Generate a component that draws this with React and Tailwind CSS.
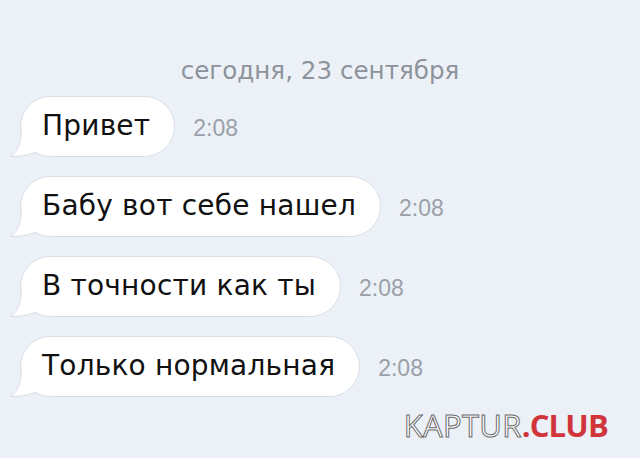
const messages = [
  { text: 'Привет', time: '2:08' },
  { text: 'Бабу вот себе нашел', time: '2:08' },
  { text: 'В точности как ты', time: '2:08' },
  { text: 'Только нормальная', time: '2:08' },
]

const Tail = () => (
  <svg
    className="absolute left-[-11px] bottom-[-1px]"
    width="40"
    height="30"
    viewBox="0 0 40 30"
  >
    <path
      d="M12.5 0 L11.5 4 C11.5 16 8 24 1 29.2 C9 29.8 18 28.5 26 25 L28 12 L14 0 Z"
      fill="#ffffff"
    />
    <path
      d="M11.2 0 C11.4 16 8 24 1 29.2 C9 29.8 18 28.5 26 25"
      fill="none"
      stroke="#d9dee5"
      strokeWidth="1"
    />
  </svg>
)

const Bubble = ({ text, time }) => (
  <div className="flex items-center">
    <div className="relative h-[61px] flex items-center pl-[21px] pr-[24px] bg-white border border-[#d9dee5] rounded-full">
      <Tail />
      <span className="relative text-[28px] tracking-[0.2px] text-[#111] leading-none font-['DejaVu_Sans',sans-serif]">
        {text}
      </span>
    </div>
    <span className="ml-[18px] pt-[4px] text-[23px] text-[#9aa0a8] leading-none">
      {time}
    </span>
  </div>
)

export default () => (
  <div className="relative w-[640px] h-[458px] overflow-hidden bg-[#ecf1f8] font-['Liberation_Sans',Arial,sans-serif]">
    <div className="pt-[59px] text-center text-[24.6px] leading-none text-[#8e939b] font-['DejaVu_Sans',sans-serif]">
      сегодня, 23 сентября
    </div>
    <div className="flex flex-col gap-[19px] pl-[20px] pt-[12px]">
      {messages.map((m, i) => (
        <Bubble key={i} text={m.text} time={m.time} />
      ))}
    </div>
    <div className="absolute right-[32px] bottom-[17px] text-[31px] leading-none font-['Open_Sans','Liberation_Sans',sans-serif]">
      <span className="font-medium tracking-[0.3px] text-white [-webkit-text-stroke:1px_#6b6b6b]">KAPTUR</span>
      <span className="font-bold tracking-[-0.8px] text-[#d1353b]">.CLUB</span>
    </div>
  </div>
)
